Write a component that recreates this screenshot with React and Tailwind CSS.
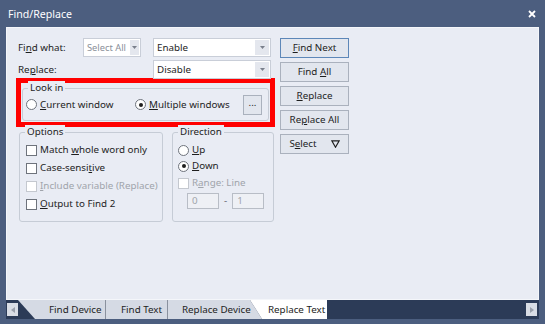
import React from "react";

const U = ({ children }) => <span className="underline underline-offset-[1px] decoration-[1px]">{children}</span>;

function Combo({ text, w, gray, btn = "w-[14px]", textCls = "" }) {
  return (
    <div className={`${w} h-[19px] flex bg-white border border-[#c9ced8] shrink-0`}>
      <div className={`flex-1 flex items-center pl-[3px] whitespace-nowrap overflow-hidden ${textCls} ${gray ? "text-[#8a8f99]" : "text-[#1e1e1e]"}`}>{text}</div>
      <div className={`${btn} m-[1px] bg-[#e4e7ee] flex items-center justify-center`}>
        <svg width="5" height="3" viewBox="0 0 5 3"><path d="M0 0h5L2.5 3z" fill="#7a808c" /></svg>
      </div>
    </div>
  );
}

function Btn({ children, primary }) {
  return (
    <div className={`h-[20px] w-[69px] flex items-center justify-center bg-[#e2e6ee] border ${primary ? "border-[#5d87b8]" : "border-[#aab1bd]"} text-[#1e1e1e] whitespace-nowrap`}>
      {children}
    </div>
  );
}

function Radio({ on, children, className = "" }) {
  return (
    <div className={`flex items-center gap-[3px] whitespace-nowrap ${className}`}>
      <div className="w-[11px] h-[11px] rounded-full border border-[#6e737c] bg-white flex items-center justify-center">
        {on && <div className="w-[4px] h-[4px] rounded-full bg-[#1e1e1e]" />}
      </div>
      <span>{children}</span>
    </div>
  );
}

function Check({ disabled, children }) {
  return (
    <div className={`flex items-center gap-[3px] whitespace-nowrap ${disabled ? "text-[#a0a4ab]" : ""}`}>
      <div className={`w-[11px] h-[11px] border bg-white ${disabled ? "border-[#c4c8cf]" : "border-[#6e737c]"}`} />
      <span>{children}</span>
    </div>
  );
}

function Group({ title, className = "", children }) {
  return (
    <div className={`relative border border-[#c6ccd6] rounded-[3px] ${className}`}>
      <div className="absolute -top-[8px] left-[5px] px-[2px] bg-[#e9ecf4] leading-[14px] whitespace-nowrap">{title}</div>
      {children}
    </div>
  );
}

export default function App() {
  return (
    <div
      className="w-[545px] h-[324px] bg-[#4c5e7f] flex flex-col text-[9.8px] leading-[14px] text-[#1e1e1e]"
      style={{ fontFamily: '"Noto Sans", sans-serif' }}
    >
      <div className="h-[27px] flex items-center justify-between pl-[8px] pr-[9px] text-white text-[10.6px]">
        <span>Find/Replace</span>
        <svg width="8" height="8" viewBox="0 0 8 8"><path d="M1 1l6 6M7 1l-6 6" stroke="white" strokeWidth="1.8" /></svg>
      </div>
      <div className="mx-[6px] flex-1 border border-[#f4f6fa] bg-[#e9ecf4] flex flex-col">
        <div className="flex pl-[11px] pt-[10px]">
          <div className="w-[257px]">
            <div className="flex items-center h-[19px]">
              <span className="w-[65px] whitespace-nowrap">Fi<U>n</U>d what:</span>
              <Combo text="Select All" w="w-[58px]" gray btn="w-[9px]" textCls="text-[9.3px]" />
              <div className="w-[12px] shrink-0" />
              <Combo text="Enable" w="w-[118px]" />
            </div>
            <div className="flex items-center h-[19px] mt-[3px]">
              <span className="w-[135px] whitespace-nowrap">Re<U>p</U>lace:</span>
              <Combo text="Disable" w="w-[118px]" />
            </div>
            <div className="-ml-[2px] mt-[-1px] w-[259px] border-[5px] border-[#ff0000] px-[1px] pt-[5px] pb-[1px]">
              <Group title="Look in" className="h-[33px] flex items-center pl-[3px]">
                <Radio className="w-[109px]"><U>C</U>urrent window</Radio>
                <Radio on><U>M</U>ultiple windows</Radio>
                <div className="ml-auto mr-[6px] w-[19px] h-[20px] bg-[#e2e6ee] border border-[#aab1bd] flex items-center justify-center leading-none pb-[3px]">...</div>
              </Group>
            </div>
            <div className="flex mt-[5px] ml-[1px] gap-[9px]">
              <Group title="Options" className="w-[144px] h-[90px] pl-[6px] pt-[10px] flex flex-col gap-[4px]">
                <Check>Match <U>w</U>hole word only</Check>
                <Check>Case-sensi<U>t</U>ive</Check>
                <Check disabled><U>I</U>nclude variable (Replace)</Check>
                <Check><U>O</U>utput to Find 2</Check>
              </Group>
              <Group title="Direction" className="w-[102px] h-[90px] pl-[5px] pt-[10px] flex flex-col gap-[2px]">
                <Radio><U>U</U>p</Radio>
                <Radio on><U>D</U>own</Radio>
                <div className="mt-[1px]"><Check disabled>R<U>a</U>nge: Line</Check></div>
                <div className="flex items-center pl-[9px] gap-[5px] text-[#a0a4ab] mt-[1px]">
                  <div className="w-[32px] h-[16px] border border-[#b8bdc6] bg-[#eef0f5] pl-[4px] leading-[14px]">0</div>
                  <span className="text-[#606570]">-</span>
                  <div className="w-[32px] h-[16px] border border-[#b8bdc6] bg-[#eef0f5] pl-[4px] leading-[14px]">1</div>
                </div>
              </Group>
            </div>
          </div>
          <div className="ml-[5px] flex flex-col gap-[4px]">
            <Btn primary><span><U>F</U>ind Next</span></Btn>
            <Btn><span>Find <U>A</U>ll</span></Btn>
            <Btn><span><U>R</U>eplace</span></Btn>
            <Btn><span>Re<U>p</U>lace All</span></Btn>
            <Btn>
              <span>S<U>e</U>lect</span>
              <svg className="ml-[14px]" width="9" height="8" viewBox="0 0 9 8"><path d="M0.8 0.8h7.4L4.5 7.2z" fill="none" stroke="#1e1e1e" strokeWidth="1.2" /></svg>
            </Btn>
          </div>
        </div>
      </div>
      <div className="h-[19px] bg-[#2c3b57] mx-[6px] flex items-center">
        <div className="w-[11px] h-[13px] bg-[#d9dde5] ml-[1px] flex items-center justify-center shrink-0">
          <svg width="4" height="6" viewBox="0 0 4 6"><path d="M4 0v6L0 3z" fill="#9aa0ab" /></svg>
        </div>
        <div className="flex h-full items-stretch whitespace-nowrap">
          <div className="h-full w-[87px] flex items-center bg-[#d5dae4] pl-[31px]" style={{ clipPath: "polygon(0 0,100% 0,100% 100%,17px 100%)" }}>Find Device</div>
          <div className="h-full w-[62px] flex items-center bg-[#d5dae4] border-l border-[#8a919e] pl-[15px]">Find Text</div>
          <div className="h-full w-[95px] flex items-center bg-[#d5dae4] border-l border-[#8a919e] pl-[14px]" style={{ clipPath: "polygon(0 0,calc(100% - 12px) 0,100% 100%,0 100%)" }}>Replace Device</div>
          <div className="h-full w-[77px] flex items-center bg-white pl-[18px] -ml-[12px]" style={{ clipPath: "polygon(0 0,100% 0,100% 100%,12px 100%)" }}>Replace Text</div>
        </div>
        <div className="ml-auto w-[11px] h-[13px] bg-[#d9dde5] mr-[2px] flex items-center justify-center shrink-0">
          <svg width="4" height="6" viewBox="0 0 4 6"><path d="M0 0v6L4 3z" fill="#9aa0ab" /></svg>
        </div>
      </div>
      <div className="h-[5px]" />
    </div>
  );
}
